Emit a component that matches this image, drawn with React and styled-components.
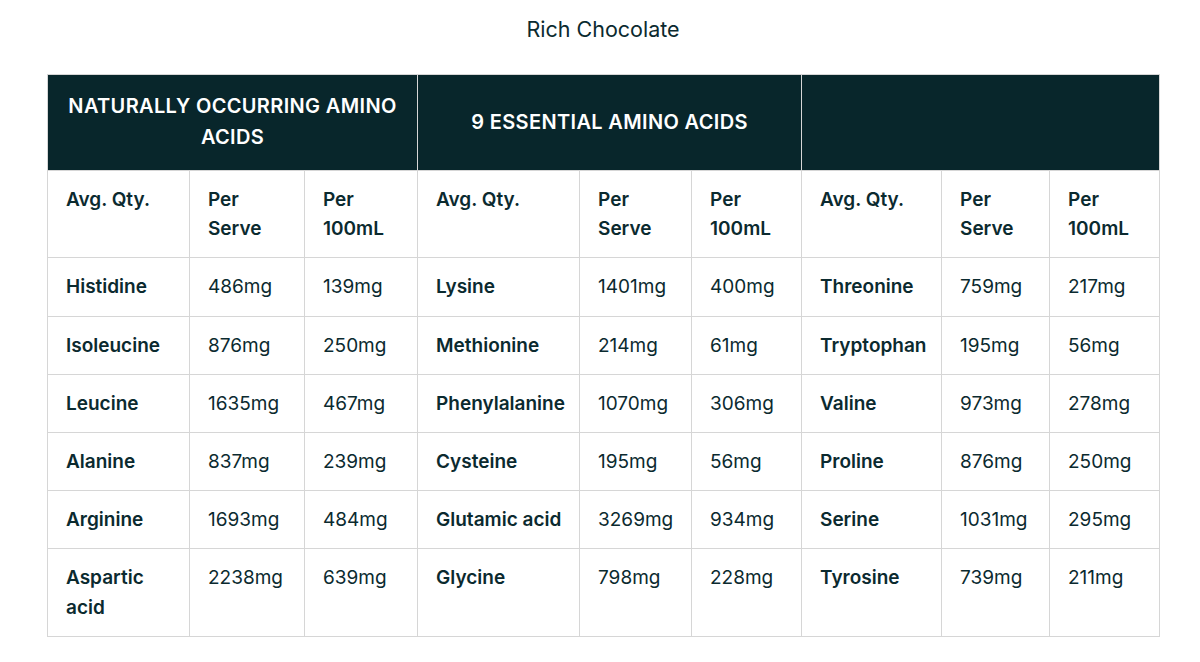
import styled, { createGlobalStyle } from "styled-components"

const groups = [
  {
    title: "NATURALLY OCCURRING AMINO ACIDS",
    widths: [142, 115, 113],
    rows: [
      ["Histidine", "486mg", "139mg"],
      ["Isoleucine", "876mg", "250mg"],
      ["Leucine", "1635mg", "467mg"],
      ["Alanine", "837mg", "239mg"],
      ["Arginine", "1693mg", "484mg"],
      ["Aspartic acid", "2238mg", "639mg"],
    ],
  },
  {
    title: "9 ESSENTIAL AMINO ACIDS",
    widths: [162, 112, 110],
    rows: [
      ["Lysine", "1401mg", "400mg"],
      ["Methionine", "214mg", "61mg"],
      ["Phenylalanine", "1070mg", "306mg"],
      ["Cysteine", "195mg", "56mg"],
      ["Glutamic acid", "3269mg", "934mg"],
      ["Glycine", "798mg", "228mg"],
    ],
  },
  {
    title: "",
    widths: [140, 108, 110],
    rows: [
      ["Threonine", "759mg", "217mg"],
      ["Tryptophan", "195mg", "56mg"],
      ["Valine", "973mg", "278mg"],
      ["Proline", "876mg", "250mg"],
      ["Serine", "1031mg", "295mg"],
      ["Tyrosine", "739mg", "211mg"],
    ],
  },
]

const GlobalStyle = createGlobalStyle`
  body {
    margin: 0;
    background: #ffffff;
    font-family: Inter, "Noto Sans", "Liberation Sans", sans-serif;
    color: #0b2a2f;
  }
`

export default function App() {
  return (
    <Page>
      <GlobalStyle />
      <Title>Rich Chocolate</Title>
      <Table>
        <colgroup>
          {groups.flatMap((g, gi) =>
            g.widths.map((w, i) => <col key={gi + "-" + i} style={{ width: w }} />)
          )}
        </colgroup>
        <thead>
          <tr>
            {groups.map((g, i) => (
              <GroupHead key={i} colSpan={3}>
                {g.title}
              </GroupHead>
            ))}
          </tr>
        </thead>
        <tbody>
          <tr>
            {groups.map((g, i) => [
              <Cell key={i + "a"} $bold>Avg. Qty.</Cell>,
              <Cell key={i + "b"} $bold>Per Serve</Cell>,
              <Cell key={i + "c"} $bold>Per 100mL</Cell>,
            ])}
          </tr>
          {groups[0].rows.map((_, r) => (
            <tr key={r}>
              {groups.map((g, i) => [
                <Cell key={i + "a"} $bold>{g.rows[r][0]}</Cell>,
                <Cell key={i + "b"}>{g.rows[r][1]}</Cell>,
                <Cell key={i + "c"}>{g.rows[r][2]}</Cell>,
              ])}
            </tr>
          ))}
        </tbody>
      </Table>
    </Page>
  )
}

const Page = styled.div`
  padding: 15px 41px 24px 47px;
`

const Title = styled.h2`
  margin: 0 0 31px;
  text-align: center;
  font-size: 21.5px;
  font-weight: 400;
  line-height: 28px;
`

const Table = styled.table`
  width: 1112px;
  border-collapse: collapse;
  table-layout: fixed;
  border: 1px solid #d6d6d6;
`

const GroupHead = styled.th`
  background: #08262b;
  color: #ffffff;
  border: 1px solid #d6d6d6;
  padding: 16px 16px 17px;
  font-size: 20px;
  font-weight: 600;
  line-height: 31px;
  text-align: center;
  vertical-align: middle;
  height: 62px;
  letter-spacing: 0.35px;
`

const Cell = styled.td`
  border: 1px solid #d6d6d6;
  padding: 14px 16px 14px 18px;
  font-size: 19px;
  line-height: 29.2px;
  font-weight: ${p => (p.$bold ? 600 : 400)};
  vertical-align: top;
`
